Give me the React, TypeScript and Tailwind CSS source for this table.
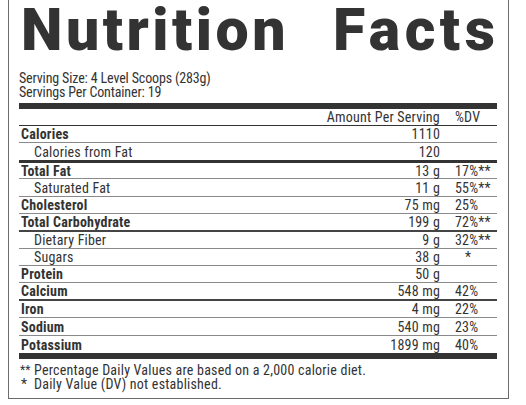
import React from "react";

type Row = {
  name: string;
  amount: string;
  dv?: string;
  bold?: boolean;
  indent?: boolean;
  line: "thin" | "dark" | "thick" | "none";
  h: string;
  dvCenter?: boolean;
};

const rows: Row[] = [
  { name: "Calories", amount: "1110", bold: true, line: "thin", h: "h-[17px]" },
  { name: "Calories from Fat", amount: "120", indent: true, line: "thick", h: "h-[20px]" },
  { name: "Total Fat", amount: "13 g", dv: "17%**", bold: true, line: "thin", h: "h-[16px]" },
  { name: "Saturated Fat", amount: "11 g", dv: "55%**", indent: true, line: "thin", h: "h-[18px]" },
  { name: "Cholesterol", amount: "75 mg", dv: "25%", bold: true, line: "thin", h: "h-[17px]" },
  { name: "Total Carbohydrate", amount: "199 g", dv: "72%**", bold: true, line: "dark", h: "h-[18px]" },
  { name: "Dietary Fiber", amount: "9 g", dv: "32%**", indent: true, line: "thin", h: "h-[17px]" },
  { name: "Sugars", amount: "38 g", dv: "*", indent: true, dvCenter: true, line: "thin", h: "h-[17px]" },
  { name: "Protein", amount: "50 g", bold: true, line: "thin", h: "h-[17px]" },
  { name: "Calcium", amount: "548 mg", dv: "42%", bold: true, line: "dark", h: "h-[18px]" },
  { name: "Iron", amount: "4 mg", dv: "22%", bold: true, line: "thin", h: "h-[17px]" },
  { name: "Sodium", amount: "540 mg", dv: "23%", bold: true, line: "thin", h: "h-[18px]" },
  { name: "Potassium", amount: "1899 mg", dv: "40%", bold: true, line: "none", h: "h-[17px]" },
];

const lineClass: Record<Row["line"], string> = {
  thin: "border-b border-[#8a8a8a]",
  dark: "border-b-2 border-[#444]",
  thick: "border-b-[3px] border-[#333]",
  none: "",
};

export default function App() {
  return (
    <div className="w-[526px] h-[405px] bg-white overflow-hidden">
      <div
        className="ml-[8px] w-[501px] h-[399px] border-x border-b border-[#6b6b6b] pl-[10px] pr-[11px] text-[#333]"
        style={{ fontFamily: '"Roboto Condensed", "Liberation Sans Narrow", Roboto, sans-serif' }}
      >
        <div
          className="flex text-[59px] leading-[59px] font-black whitespace-nowrap pl-[2px]"
          style={{ fontFamily: "Roboto, sans-serif" }}
        >
          <span className="tracking-[3.5px]">Nutrition</span>
          <span className="ml-[44px] tracking-[4.5px]">Facts</span>
        </div>
        <div className="mt-[13px] text-[14px] leading-[13.5px] tracking-[-0.15px]">
          <div>Serving Size: 4 Level Scoops (283g)</div>
          <div>Servings Per Container: 19</div>
        </div>
        <div className="mt-[4px] h-[6px] bg-[#333]" />
        <div className="flex items-center h-[17px] border-b border-[#333] text-[14px] leading-none tracking-[0.22px]">
          <div className="flex-1" />
          <div className="w-[130px] text-right">Amount Per Serving</div>
          <div className="w-[15px]" />
          <div className="w-[42px]">%DV</div>
        </div>
        {rows.map((r) => (
          <div
            key={r.name}
            className={`flex items-center text-[14px] leading-none tracking-[0.2px] ${r.h} ${lineClass[r.line]}`}
          >
            <div className={`flex-1 ${r.bold ? "font-bold" : ""} ${r.indent ? "pl-[15px]" : "pl-[2px]"}`}>
              {r.name}
            </div>
            <div className="w-[130px] text-right">{r.amount}</div>
            <div className="w-[15px]" />
            <div className={`w-[42px] ${r.dvCenter ? "pl-[10px]" : ""}`}>{r.dv ?? ""}</div>
          </div>
        ))}
        <div className="h-[6px] bg-[#333]" />
        <div className="mt-[4px] text-[14px] leading-[14px] tracking-[0.22px]">
          <div className="flex">
            <div className="w-[15px] pl-[1px] text-[12px] tracking-normal">**</div>
            <div>Percentage Daily Values are based on a 2,000 calorie diet.</div>
          </div>
          <div className="flex">
            <div className="w-[15px] pl-[2px]">*</div>
            <div>Daily Value (DV) not established.</div>
          </div>
        </div>
      </div>
    </div>
  );
}
